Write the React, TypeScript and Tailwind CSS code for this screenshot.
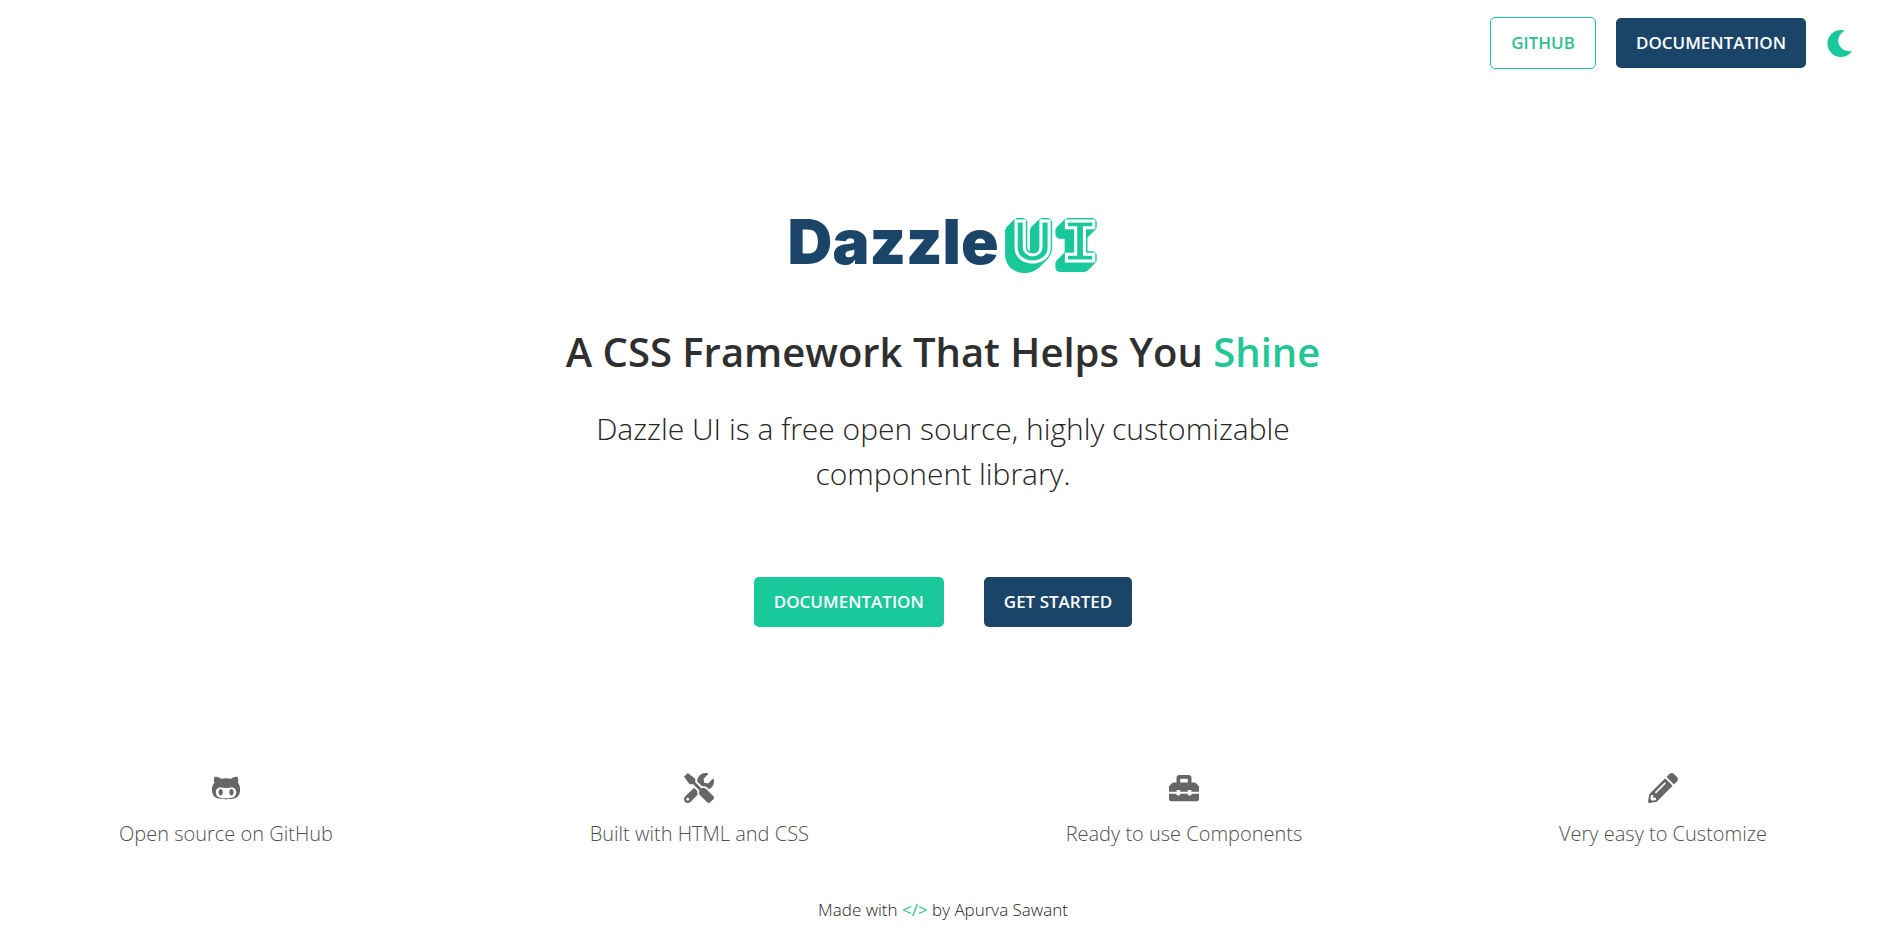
import type { ReactNode } from "react";
import { FaGithubAlt, FaMoon, FaPencilAlt, FaToolbox, FaTools } from "react-icons/fa";

const ACCENT = "#19c89b";

/* Builds the text-shadow of a letter that has a rim on every side and is extruded down to the left. */
function extrude(depth: number, rim: number): string {
  const diagonal = rim - 1;
  const edge = [
    [rim, 0],
    [-rim, 0],
    [0, rim],
    [0, -rim],
    [diagonal, diagonal],
    [-diagonal, diagonal],
    [diagonal, -diagonal],
    [-diagonal, -diagonal],
  ];
  const shadows: string[] = [];
  for (let step = 0; step <= depth; step++) {
    for (const [x, y] of edge) {
      shadows.push(`${x - step}px ${y + step}px 0 ${ACCENT}`);
    }
  }
  return shadows.join(", ");
}

const block = { textShadow: extrude(8, 3) };

function ButtonLink({ className, children }: { className: string; children: ReactNode }) {
  return (
    <a
      href="#"
      className={`rounded-[5px] px-5 py-[13px] text-[17px] leading-6 font-semibold uppercase ${className}`}
    >
      {children}
    </a>
  );
}

const features = [
  { icon: FaGithubAlt, label: "Open source on GitHub" },
  { icon: FaTools, label: "Built with HTML and CSS" },
  { icon: FaToolbox, label: "Ready to use Components" },
  { icon: FaPencilAlt, label: "Very easy to Customize" },
];

export default function App() {
  return (
    <div className="min-h-screen bg-white font-['Open_Sans',sans-serif] text-[#242424]">
      <header className="flex items-center justify-end gap-5 pt-[17px] pr-[33px]">
        <ButtonLink className="border border-[#19c89b] text-[#32be94]">Github</ButtonLink>
        <ButtonLink className="bg-[#1a4569] text-white">Documentation</ButtonLink>
        <button type="button" aria-label="Dark mode" className="text-[27px] text-[#19c89b]">
          <FaMoon />
        </button>
      </header>

      <main>
        <section className="flex flex-col items-center pt-[130px] text-center">
          <h1 className="leading-[84px]">
            <span className="font-['Inter',sans-serif] text-[62px] font-black text-[#1a4569]">Dazzle</span>
            <span className="ml-[14px] inline-flex items-baseline gap-[9px] align-[3px] text-[#19c89b] [-webkit-text-stroke:3px_white]">
              <span className="font-['Inter',sans-serif] text-[55px] font-bold" style={block}>U</span>
              <span className="font-['Liberation_Mono',monospace] text-[61px] font-bold" style={block}>I</span>
            </span>
          </h1>
          <h2 className="mt-[22px] text-[40px] leading-[60px] font-semibold text-[#2f2f2f]">
            A CSS Framework That Helps You <span className="text-[#22c795]">Shine</span>
          </h2>
          <p className="mt-6 max-w-[760px] text-[30px] leading-[45px] font-light">
            Dazzle UI is a free open source, highly customizable component library.
          </p>
          <div className="mt-[81px] flex gap-10">
            <ButtonLink className="bg-[#19c89b] text-white">Documentation</ButtonLink>
            <ButtonLink className="bg-[#1a4569] text-white">Get Started</ButtonLink>
          </div>
        </section>

        <ul className="mt-[146px] flex justify-between px-[119px] text-[#666666]">
          {features.map(({ icon: Icon, label }) => (
            <li key={label} className="flex flex-col items-center gap-4">
              <Icon className="text-[30px]" />
              <span className="text-[20px] leading-[30px] font-light text-[#505050]">{label}</span>
            </li>
          ))}
        </ul>
      </main>

      <footer className="mt-[49px] text-center text-[17px] leading-6 font-light">
        Made with <span className="font-medium text-[#32be94]">&lt;/&gt;</span> by Apurva Sawant
      </footer>
    </div>
  );
}
